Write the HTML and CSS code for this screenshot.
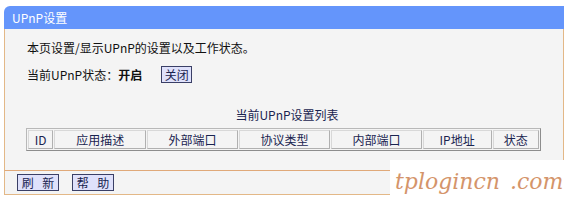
FILE: index.html
```html
<!DOCTYPE html>
<html>
<head>
<meta charset="utf-8">
<link rel="stylesheet" href="styles.css">
</head>
<body>
<div class="panel">
  <div class="head">UPnP设置</div>
  <div class="main">
    <p class="desc">本页设置/显示UPnP的设置以及工作状态。</p>
    <div class="status">
      <span class="label">当前UPnP状态：<b>开启</b></span>
      <button class="btn btn-close">关闭</button>
    </div>
    <div class="caption">当前UPnP设置列表</div>
    <table class="list">
      <tr>
        <th class="c-id">ID</th>
        <th class="c-desc">应用描述</th>
        <th class="c-ext">外部端口</th>
        <th class="c-proto">协议类型</th>
        <th class="c-int">内部端口</th>
        <th class="c-ip">IP地址</th>
        <th class="c-st">状态</th>
      </tr>
    </table>
  </div>
  <div class="foot">
    <button class="btn btn-wide">刷 新</button>
    <button class="btn btn-wide">帮 助</button>
  </div>
</div>
<div class="mark">tplogincn .com</div>
</body>
</html>
```
FILE: styles.css
```css
html, body {
  margin: 0;
  padding: 0;
  background: #ffffff;
}
body {
  font-family: "Noto Sans CJK SC", "DejaVu Sans", sans-serif;
  font-size: 12px;
  color: #111;
  padding: 6px 0 0 4px;
  height: 202px;
  box-sizing: border-box;
  overflow: hidden;
}
.panel {
  width: 560px;
}
.head {
  height: 23px;
  line-height: 23px;
  background: #6495fb;
  color: #ffffff;
  border-top-left-radius: 6px;
  padding-left: 8px;
  font-size: 12px;
}
.main {
  background: #f4f4f4;
  border-left: 1px solid #e3b887;
  border-right: 1px solid #e3b887;
  height: 141px;
  box-sizing: border-box;
  padding: 10px 0 0 22px;
}
.desc {
  margin: 0;
  line-height: 18px;
}
.status {
  display: flex;
  align-items: center;
  margin-top: 8px;
  height: 18px;
}
.label b {
  font-weight: bold;
}
.btn {
  font-family: "Noto Sans CJK SC", sans-serif;
  font-size: 12px;
  color: #1a2450;
  background: #dfe1fb;
  border: 1px solid #3a3f66;
  padding: 0;
  height: 17px;
  line-height: 15px;
  box-sizing: border-box;
  margin: 0;
}
.btn-close {
  width: 31px;
  margin-left: 19px;
}
.caption {
  margin-top: 24px;
  text-align: center;
  width: 518px;
  color: #1a2450;
  line-height: 16px;
  margin-left: 1px;
}
.list {
  margin-top: 5px;
  margin-left: -1px;
  border-collapse: separate;
  border-spacing: 1px;
  border: 1px solid #b8b8b8;
  border-right-color: #8d8d8d;
  border-bottom-color: #8d8d8d;
  width: 515px;
  background: #f4f4f4;
}
.list th {
  font-weight: normal;
  color: #1a2450;
  height: 17px;
  padding: 0;
  border: 1px solid #b0b0b0;
  border-top-color: #d8d8d8;
  border-left-color: #d8d8d8;
  font-size: 12px;
  line-height: 15px;
}
.c-id { width: 23px; }
.c-desc { width: 89px; }
.c-ext { width: 88px; }
.c-proto { width: 88px; }
.c-int { width: 88px; }
.c-ip { width: 66px; }
.c-st { width: 44px; }
.foot {
  background: #f4f4f4;
  border: 1px solid #e3b887;
  border-top-color: #e0a979;
  height: 25px;
  box-sizing: border-box;
  display: flex;
  align-items: center;
  padding-left: 12px;
  gap: 13px;
}
.btn-wide {
  width: 42px;
  letter-spacing: 3px;
  text-indent: 3px;
}
.mark {
  position: absolute;
  left: 390px;
  top: 160px;
  width: 178px;
  height: 42px;
  background: #ffffff;
  font-family: "DejaVu Serif", serif;
  font-style: italic;
  font-size: 22px;
  color: #d4946a;
  line-height: 44px;
  padding-left: 5px;
  box-sizing: border-box;
  white-space: nowrap;
  overflow: hidden;
  word-spacing: 3px;
}
```
